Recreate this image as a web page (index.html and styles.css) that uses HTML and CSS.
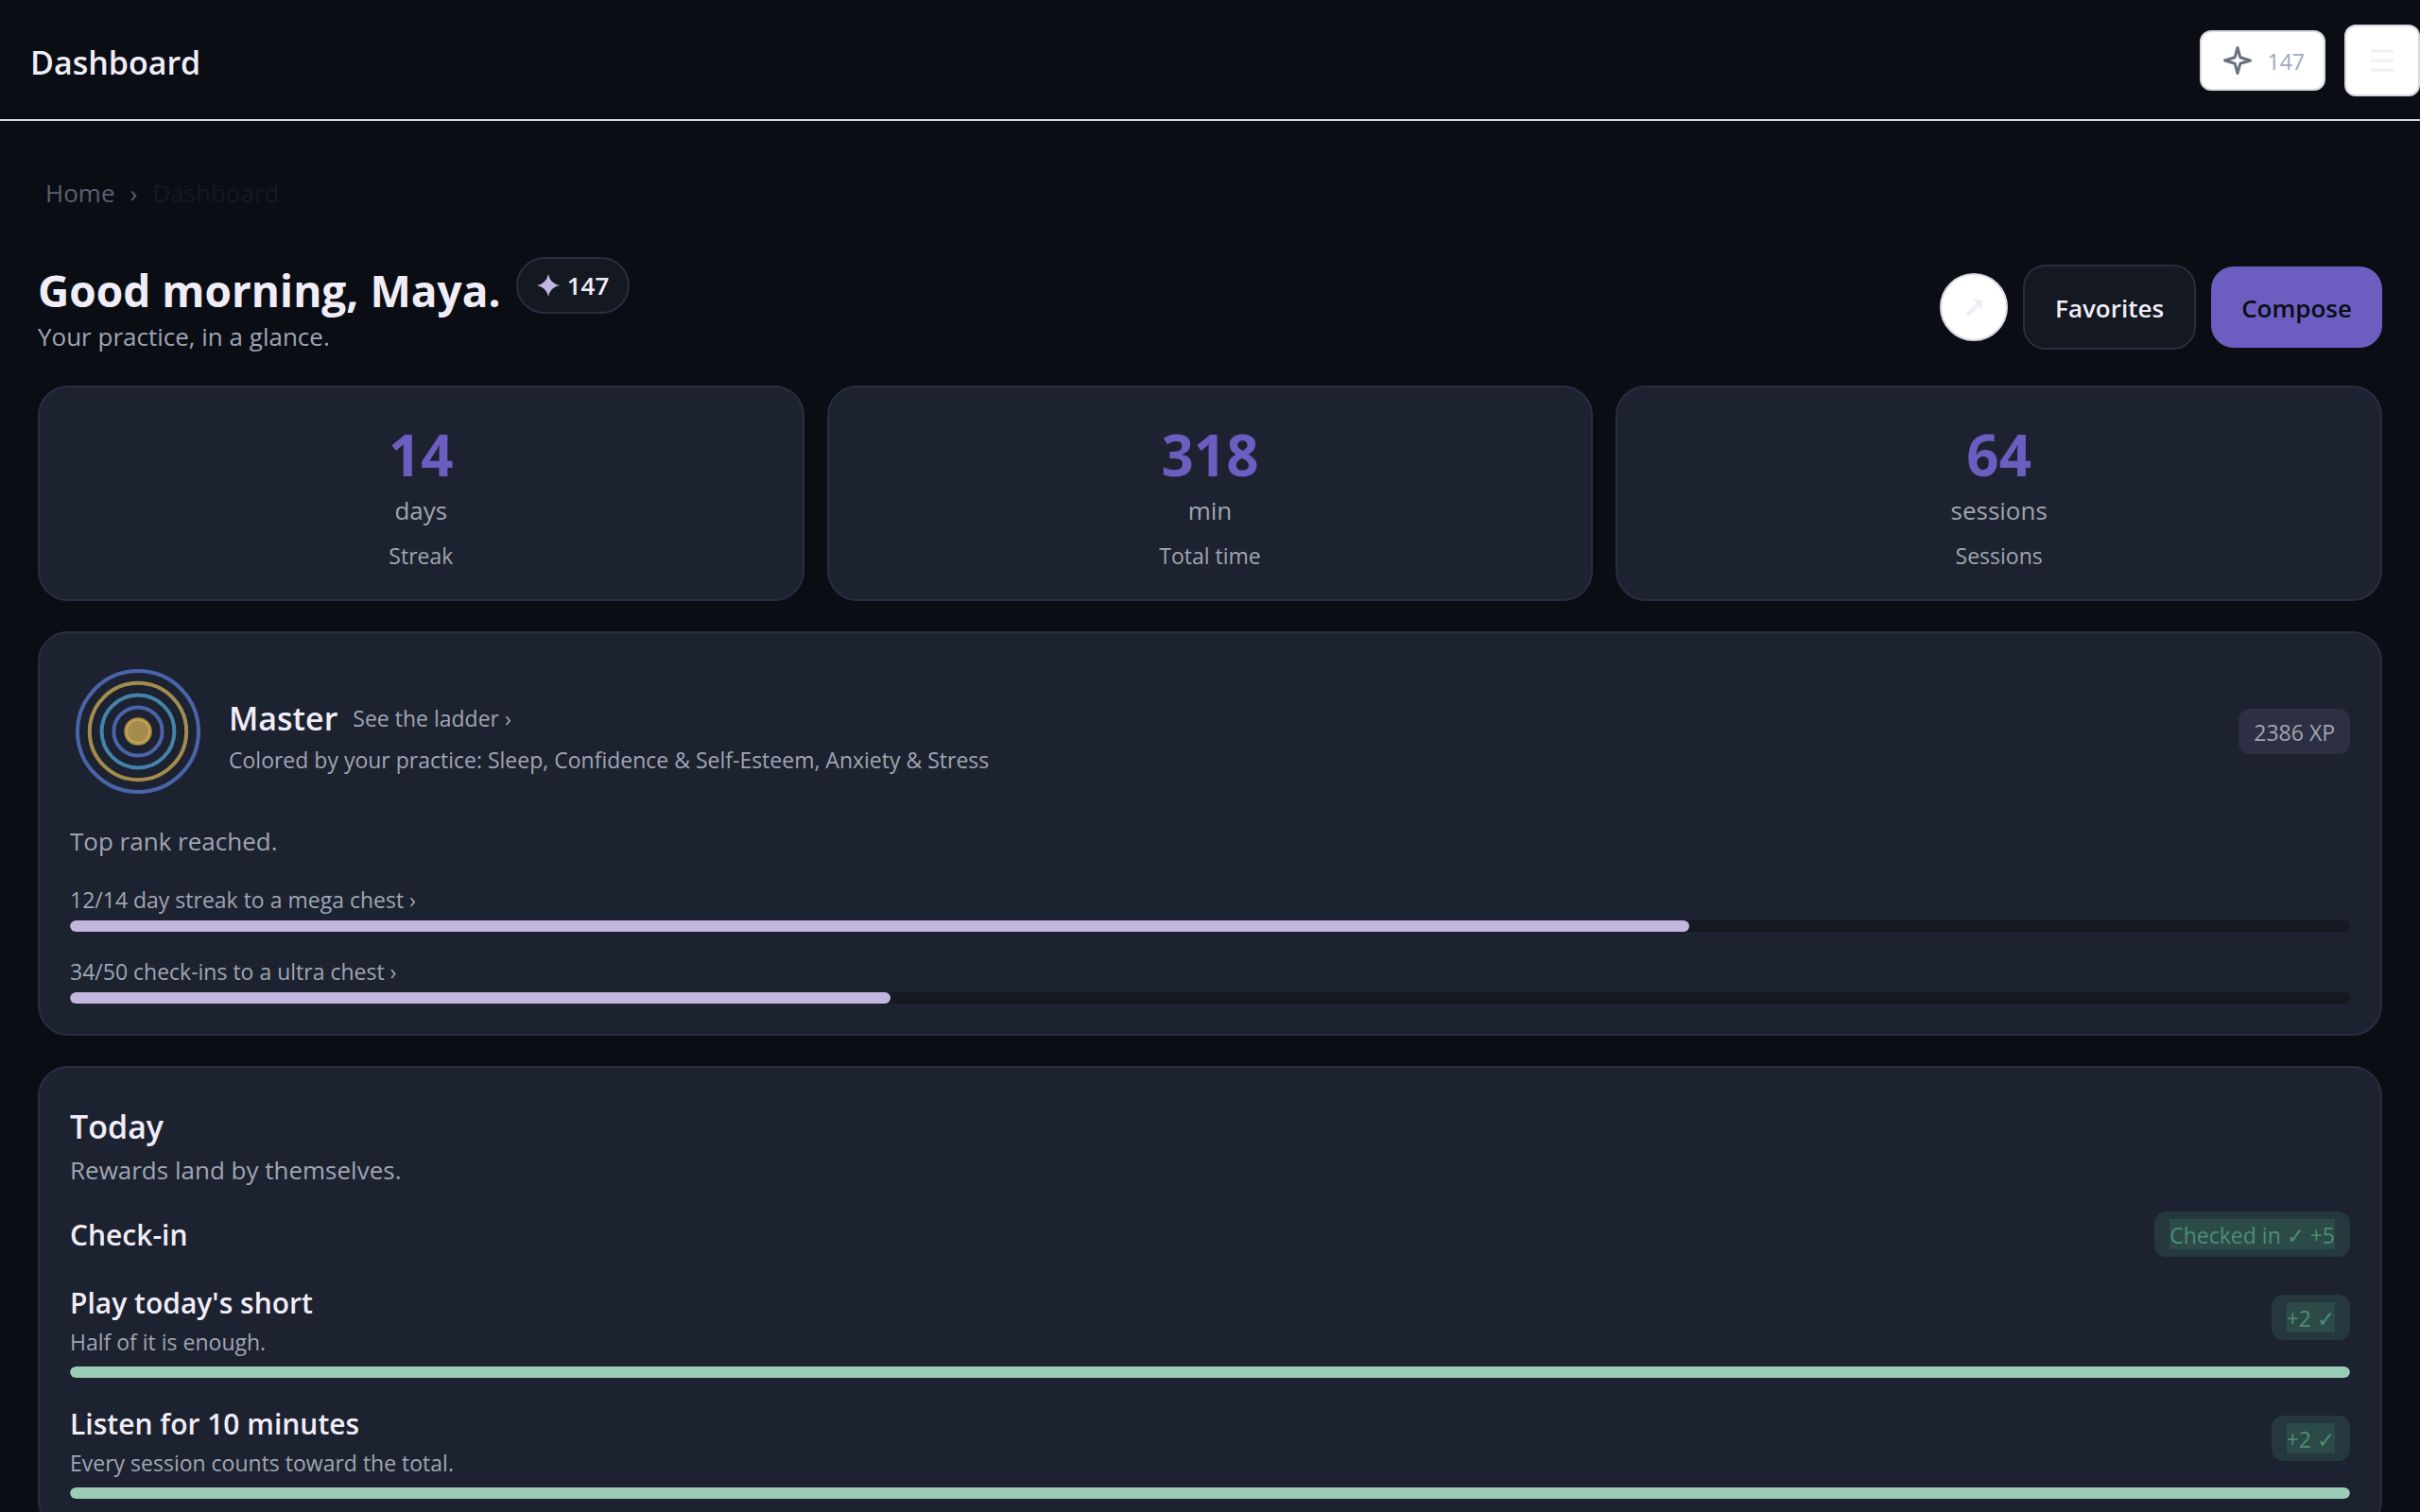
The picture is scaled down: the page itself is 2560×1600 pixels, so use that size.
FILE: index.html
```
<!DOCTYPE html>
<html lang="en">
    <head>
        <meta charset="utf-8">
        <title>Dashboard</title>
        <link rel="stylesheet" href="styles.css">
    </head>
    <body>
        <header class="topbar">
            <h1 class="topbar-title">Dashboard</h1>
            <div class="topbar-actions">
                <button type="button" class="balance">
                    <svg viewBox="0 0 32 32" width="32" height="32" fill="none" stroke="currentColor" stroke-width="3" stroke-linejoin="round"><path d="M16 2.500L18.800 12.700L29.500 16L18.800 19.300L16 29.500L13.200 19.300L2.500 16L13.200 12.700Z"/></svg>
                    <span class="balance-count">147</span>
                </button>
                <button type="button" class="menu" aria-label="Menu">
                    <svg viewBox="0 0 24 24" width="24" height="24" stroke="currentColor" stroke-width="3"><path d="M0 2H24M0 12H24M0 22H24"/></svg>
                </button>
            </div>
        </header>
        <main>
            <nav class="crumbs">
                <a href="#home">Home</a>
                <span>›</span>
                <span class="crumb-here">Dashboard</span>
            </nav>
            <div class="hero">
                <div>
                    <div class="greeting">
                        <h2>Good morning, Maya.</h2>
                        <span class="pill">
                            <svg viewBox="0 0 24 24" width="24" height="24" fill="currentColor"><path d="M12 0Q14 10 24 12Q14 14 12 24Q10 14 0 12Q10 10 12 0Z"/></svg>
                            147
                        </span>
                    </div>
                    <p>Your practice, in a glance.</p>
                </div>
                <div class="actions">
                    <button type="button" class="share" aria-label="Share">
                        <svg viewBox="0 0 20 20" width="20" height="20"><path d="M9 2H19V12L15.500 9L4 20L1 17L12.500 6Z" fill="currentColor"/></svg>
                    </button>
                    <button type="button" class="btn">Favorites</button>
                    <button type="button" class="btn primary">Compose</button>
                </div>
            </div>
            <section class="stats">
                <div class="card stat">
                    <strong>14</strong>
                    <p>days</p>
                    <small>Streak</small>
                </div>
                <div class="card stat">
                    <strong>318</strong>
                    <p>min</p>
                    <small>Total time</small>
                </div>
                <div class="card stat">
                    <strong>64</strong>
                    <p>sessions</p>
                    <small>Sessions</small>
                </div>
            </section>
            <section class="card stack">
                <div class="rank">
                    <svg class="rings" viewBox="0 0 144 144" width="144" height="144" fill="none" stroke-width="4">
                        <circle cx="72" cy="72" r="64" stroke="#4a64aa"/>
                        <circle cx="72" cy="72" r="51.200" stroke="#a48c4e"/>
                        <circle cx="72" cy="72" r="38.400" stroke="#4484aa"/>
                        <circle cx="72" cy="72" r="25.600" stroke="#4a64aa"/>
                        <circle cx="72" cy="72" r="14.800" fill="#a48c4e"/>
                        <circle cx="72" cy="72" r="12" stroke="#c6a452" stroke-width="2"/>
                    </svg>
                    <div class="rank-text">
                        <div class="rank-name">
                            <h3>Master</h3>
                            <a href="#ladder">See the ladder ›</a>
                        </div>
                        <small>Colored by your practice: Sleep, Confidence &amp; Self-Esteem, Anxiety &amp; Stress</small>
                    </div>
                    <span class="badge"><span>2386 XP</span></span>
                </div>
                <p>Top rank reached.</p>
                <div class="goal">
                    <a href="#mega">12/14 day streak to a mega chest ›</a>
                    <div class="bar"><div class="fill" style="width:71%"></div></div>
                </div>
                <div class="goal">
                    <a href="#ultra">34/50 check-ins to a ultra chest ›</a>
                    <div class="bar"><div class="fill" style="width:36%"></div></div>
                </div>
            </section>
            <section class="card stack">
                <div>
                    <h3>Today</h3>
                    <p>Rewards land by themselves.</p>
                </div>
                <div class="task">
                    <h4>Check-in</h4>
                    <span class="badge done"><span>Checked in ✓ +5</span></span>
                </div>
                <div>
                    <div class="task">
                        <div>
                            <h4>Play today's short</h4>
                            <small>Half of it is enough.</small>
                        </div>
                        <span class="badge done"><span>+2 ✓</span></span>
                    </div>
                    <div class="bar"><div class="fill full" style="width:100%"></div></div>
                </div>
                <div>
                    <div class="task">
                        <div>
                            <h4>Listen for 10 minutes</h4>
                            <small>Every session counts toward the total.</small>
                        </div>
                        <span class="badge done"><span>+2 ✓</span></span>
                    </div>
                    <div class="bar"><div class="fill full" style="width:100%"></div></div>
                </div>
            </section>
        </main>
    </body>
</html>
```

FILE: styles.css
```
*{
    box-sizing:border-box;
}
html,body{
    margin:0;
    padding:0;
}
body{
    background:#0a0d14;
    color:#f0edf8;
    font:26px/40px "Segoe UI","Open Sans","Noto Sans",sans-serif;
}
h1,h2,h3,h4,p{
    margin:0;
}
h1,h3,h4{
    font-weight:600;
}
a{
    color:inherit;
    text-decoration:none;
}
button{
    font:inherit;
    cursor:pointer;
}
svg{
    display:block;
    flex:none;
}
p,small,.goal a,.rank-name a{
    color:#a0a5b4;
}
small,.goal a,.rank-name a{
    display:block;
    padding-top:4px;
    font-size:23px;
    line-height:28px;
}
h1,h3{
    padding-top:4px;
    font-size:34px;
    line-height:52px;
}
h4{
    padding-top:2px;
    font-size:30px;
    line-height:46px;
}

/* top bar */
.topbar{
    display:flex;
    align-items:center;
    justify-content:space-between;
    height:128px;
    padding:2px 0 0 32px;
    border-bottom:2px solid #d4d4da;
}
.topbar-actions{
    display:flex;
    align-items:center;
    gap:20px;
}
.balance,.menu{
    display:flex;
    align-items:center;
    justify-content:center;
    background:#fff;
    border:2px solid #d9d6e3;
    border-radius:12px;
}
.balance{
    gap:16px;
    height:64px;
    padding:0 20px 0 22px;
    color:#6b7080;
}
.balance-count{
    padding-top:2px;
    font-size:23px;
    color:#a0a8bb;
}
.menu{
    width:80px;
    height:76px;
    color:#f0edf8;
}

main{
    padding:56px 40px 40px;
}
.crumbs{
    display:flex;
    gap:16px;
    padding:0 8px;
    margin-bottom:48px;
    color:#5b6070;
}
.crumb-here{
    color:#161924;
}
.hero{
    display:flex;
    align-items:center;
    justify-content:space-between;
    margin-bottom:32px;
}
.greeting{
    display:flex;
    align-items:flex-start;
    gap:16px;
    height:64px;
}
h2{
    font-size:46px;
    line-height:70px;
    font-weight:700;
}
.pill{
    display:flex;
    align-items:center;
    gap:8px;
    height:60px;
    padding:0 20px;
    background:#141820;
    border:2px solid #282e40;
    border-radius:30px;
    font-weight:600;
}
.pill svg{
    color:#c3b7e0;
}
.actions{
    display:flex;
    align-items:center;
    gap:16px;
    padding-top:2px;
}
.share{
    display:flex;
    align-items:center;
    justify-content:center;
    width:72px;
    height:72px;
    background:#fff;
    border:2px solid #d9d6e3;
    border-radius:50%;
    color:#f0edf8;
}
.btn{
    height:90px;
    padding:2px 32px 0;
    background:#141820;
    border:2px solid #282e40;
    border-radius:24px;
    color:#f0edf8;
    font-weight:600;
}
.primary{
    height:86px;
    background:#6c5ec0;
    border:none;
    color:#0a0d14;
}

/* cards */
.card{
    padding:32px;
    background:#1c222f;
    border:2px solid #282e40;
    border-radius:32px;
}
.stack{
    display:flex;
    flex-direction:column;
    gap:24px;
    margin-top:32px;
}
.stats{
    display:grid;
    grid-template-columns:repeat(3,1fr);
    gap:24px;
}
.stat{
    text-align:center;
}
.stat strong{
    display:block;
    color:#6c5ec0;
    font-size:60px;
    line-height:78px;
}
.stat small{
    margin-top:10px;
}
.rank{
    display:flex;
    align-items:center;
    gap:24px;
}
.rank-text{
    flex:1;
}
.rank-name{
    display:flex;
    align-items:center;
    gap:16px;
}
.goal{
    display:grid;
    gap:8px;
}
.badge{
    padding:8px 16px;
    background:#2c3042;
    border-radius:12px;
    color:#a0a5b4;
    font-size:23px;
    line-height:30px;
}
.badge span{
    display:block;
    padding-top:2px;
}
.done{
    background:#25383e;
    color:#4b8f74;
}
.done span{
    background:#2c4a48;
}
.bar{
    height:12px;
    background:#141820;
    border-radius:6px;
    overflow:hidden;
}
.fill{
    height:12px;
    background:#c3b7e0;
    border-radius:6px;
}
.full{
    background:#9bccb5;
}
.task{
    display:flex;
    align-items:center;
    justify-content:space-between;
}
.task + .bar{
    margin-top:12px;
}
```
